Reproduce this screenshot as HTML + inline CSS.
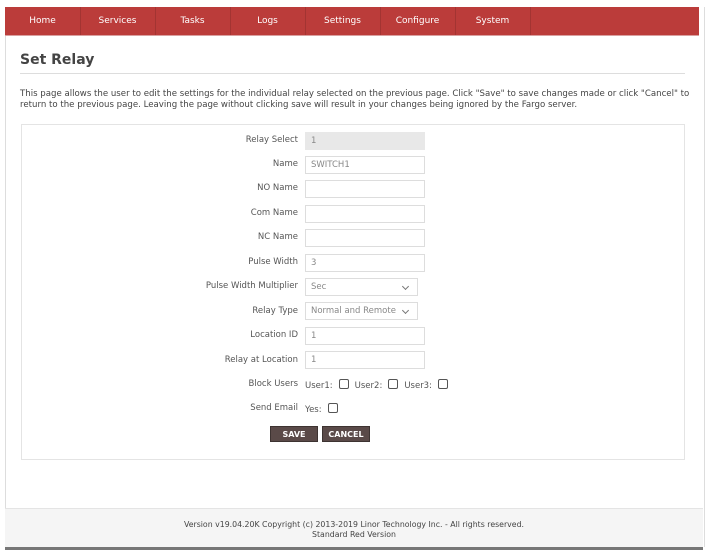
<!DOCTYPE html>
<html><head><style>
body{margin:0;background:#fff;font-family:"DejaVu Sans",Verdana,sans-serif;font-size:8.5px;color:#444;width:707px;height:559px;position:relative;overflow:hidden}
.panel{position:absolute;left:5px;top:7px;width:698px;height:540px;border-left:1px solid #ddd;border-right:1px solid #ddd;background:#fff}
.nav{position:absolute;left:5px;top:7px;width:694px;height:28px;background:#bb3c3a;border-bottom:1px solid #d9a0a0}
.nav div{position:absolute;top:0;height:28px;line-height:29px;text-align:center;color:#fff;font-size:9px;border-right:1px solid #a33432;width:75px}
h1{position:absolute;left:20px;top:52px;margin:0;font-size:14px;font-weight:bold;color:#444}
.hr{position:absolute;left:20px;top:73px;width:665px;height:1px;background:#ddd}
.desc{position:absolute;left:20px;top:89px;width:670px;line-height:11px;color:#444;font-size:8.6px}
.box{position:absolute;left:21px;top:124px;width:662px;height:334px;border:1px solid #e4e4e4}
.lbl{position:absolute;right:409px;text-align:right;color:#555;white-space:nowrap}
.inp{position:absolute;left:305px;border:1px solid #ddd;background:#fff;color:#888;line-height:16px;padding-left:5px;box-sizing:border-box;width:120px;height:18px}
.sel{width:113px}
.sel:after{content:"";position:absolute;right:9px;top:5px;width:4px;height:4px;border-right:1px solid #777;border-bottom:1px solid #777;transform:rotate(45deg)}
.cb{display:inline-block;width:8px;height:8px;border:1px solid #555;border-radius:2px;vertical-align:-1px;margin:0 6px 0 6px}
.btn{position:absolute;top:426px;height:16px;width:48px;background:#5a4a48;color:#fff;font-weight:bold;font-size:8px;text-align:center;line-height:16px;border:1px solid #3d3331;box-sizing:border-box}
.foot{position:absolute;left:5px;top:508px;width:698px;height:39px;background:#f5f5f5;border-top:1px solid #e4e4e4;text-align:center;font-size:7.8px;color:#444;line-height:9.5px;padding-top:11px;box-sizing:border-box}
.dark{position:absolute;left:5px;top:547px;width:698px;height:3px;background:#777}
</style></head><body>
<div class="panel"></div>
<div class="nav">
<div style="left:0">Home</div><div style="left:75px">Services</div><div style="left:150px">Tasks</div><div style="left:225px">Logs</div><div style="left:300px">Settings</div><div style="left:375px">Configure</div><div style="left:450px">System</div>
</div>
<h1>Set Relay</h1>
<div class="hr"></div>
<div class="desc">This page allows the user to edit the settings for the individual relay selected on the previous page. Click "Save" to save changes made or click "Cancel" to return to the previous page. Leaving the page without clicking save will result in your changes being ignored by the Fargo server.</div>
<div class="box"></div>

<div class="lbl" style="top:135px">Relay Select</div><div class="inp" style="top:132px;background:#e8e8e8;border-color:#e8e8e8">1</div>
<div class="lbl" style="top:159px">Name</div><div class="inp" style="top:156px">SWITCH1</div>
<div class="lbl" style="top:183px">NO Name</div><div class="inp" style="top:180px"></div>
<div class="lbl" style="top:208px">Com Name</div><div class="inp" style="top:205px"></div>
<div class="lbl" style="top:232px">NC Name</div><div class="inp" style="top:229px"></div>
<div class="lbl" style="top:257px">Pulse Width</div><div class="inp" style="top:254px">3</div>
<div class="lbl" style="top:281px">Pulse Width Multiplier</div><div class="inp sel" style="top:278px">Sec</div>
<div class="lbl" style="top:306px">Relay Type</div><div class="inp sel" style="top:302px">Normal and Remote</div>
<div class="lbl" style="top:330px">Location ID</div><div class="inp" style="top:327px">1</div>
<div class="lbl" style="top:355px">Relay at Location</div><div class="inp" style="top:351px">1</div>
<div class="lbl" style="top:379px">Block Users</div><div style="position:absolute;left:305px;top:379px;color:#555">User1:<span class="cb"></span>User2:<span class="cb"></span>User3:<span class="cb"></span></div>
<div class="lbl" style="top:403px">Send Email</div><div style="position:absolute;left:305px;top:403px;color:#555">Yes:<span class="cb"></span></div>
<div class="btn" style="left:270px">SAVE</div><div class="btn" style="left:322px">CANCEL</div>

<div class="foot">Version v19.04.20K Copyright (c) 2013-2019 Linor Technology Inc. - All rights reserved.<br>Standard Red Version</div>
<div class="dark"></div>
</body></html>
